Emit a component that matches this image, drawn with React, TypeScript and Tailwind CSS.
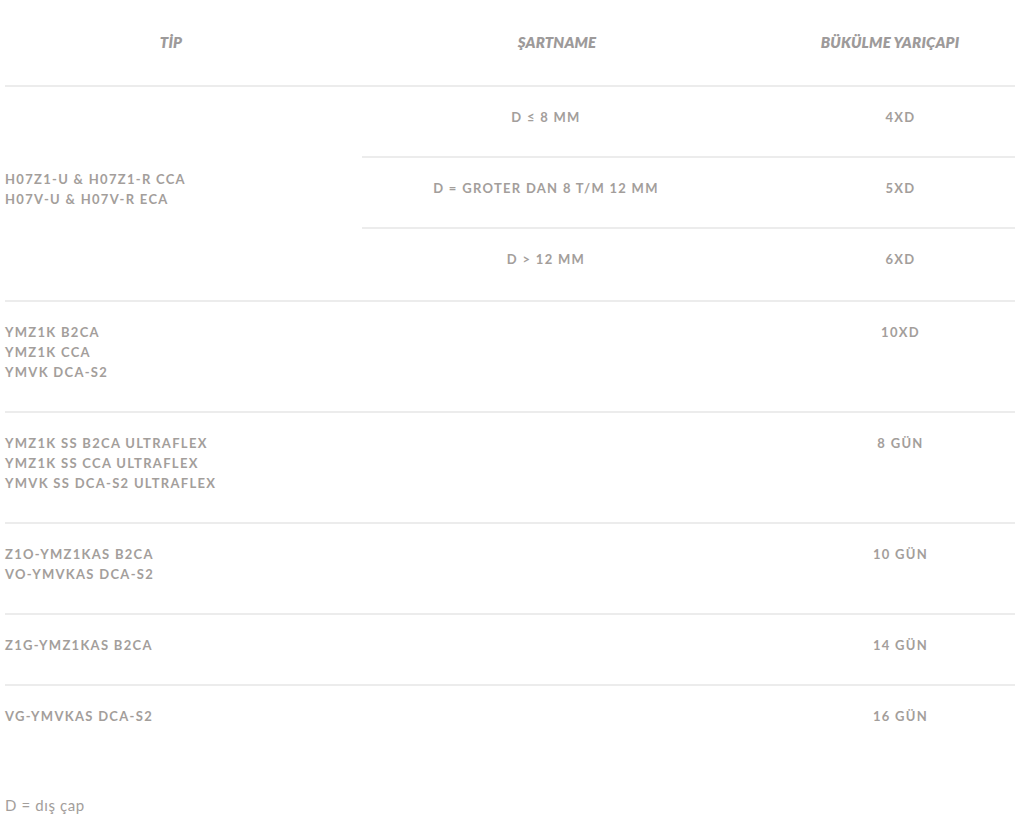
import React from "react";

const font = { fontFamily: "Lato, 'Open Sans', sans-serif" };

const specRows: { spec: string; radius: string }[] = [
  { spec: "D ≤ 8 MM", radius: "4XD" },
  { spec: "D = GROTER DAN 8 T/M 12 MM", radius: "5XD" },
  { spec: "D > 12 MM", radius: "6XD" },
];

const rows: { types: string[]; radius: string }[] = [
  { types: ["YMZ1K B2CA", "YMZ1K CCA", "YMVK DCA-S2"], radius: "10XD" },
  { types: ["YMZ1K SS B2CA ULTRAFLEX", "YMZ1K SS CCA ULTRAFLEX", "YMVK SS DCA-S2 ULTRAFLEX"], radius: "8 GÜN" },
  { types: ["Z1O-YMZ1KAS B2CA", "VO-YMVKAS DCA-S2"], radius: "10 GÜN" },
  { types: ["Z1G-YMZ1KAS B2CA"], radius: "14 GÜN" },
  { types: ["VG-YMVKAS DCA-S2"], radius: "16 GÜN" },
];

const cell = "pt-5 pb-[29px] text-[13px] font-bold uppercase leading-5 tracking-[0.1em] text-[#a39e9b]";

export default function App() {
  return (
    <div className="min-h-screen bg-white pl-[5px]" style={font}>
      <div className="grid h-[87px] grid-cols-[332px_440px_1fr] items-center border-b-2 border-[#ececec] text-[15px] font-extrabold uppercase italic tracking-[0.01em] text-[#9d9a9a]">
        <div className="text-center">TİP</div>
        <div className="text-center">ŞARTNAME</div>
        <div className="pr-[12px] text-center">BÜKÜLME YARIÇAPI</div>
      </div>

      <div className="flex border-b-2 border-[#ececec]">
        <div className={`${cell} flex w-[357px] flex-col justify-center`}>
          <div>H07Z1-U &amp; H07Z1-R CCA</div>
          <div>H07V-U &amp; H07V-R ECA</div>
        </div>
        <div className="flex-1">
          {specRows.map((r, i) => (
            <div
              key={r.spec}
              className={`grid grid-cols-[368px_1fr] ${i < specRows.length - 1 ? "border-b-2 border-[#ececec]" : "pb-[2px]"}`}
            >
              <div className={`${cell} text-center`}>{r.spec}</div>
              <div className={`${cell} pl-[56px] text-center`}>{r.radius}</div>
            </div>
          ))}
        </div>
      </div>

      {rows.map((r, i) => (
        <div
          key={r.radius}
          className={`grid grid-cols-[725px_1fr] ${i < rows.length - 1 ? "border-b-2 border-[#ececec]" : ""}`}
        >
          <div className={cell}>
            {r.types.map((t) => (
              <div key={t}>{t}</div>
            ))}
          </div>
          <div className={`${cell} pl-[56px] text-center`}>{r.radius}</div>
        </div>
      ))}

      <p className="mt-[40px] text-[15px] leading-5 tracking-[0.04em] text-[#a39e9b]">D = dış çap</p>
    </div>
  );
}
